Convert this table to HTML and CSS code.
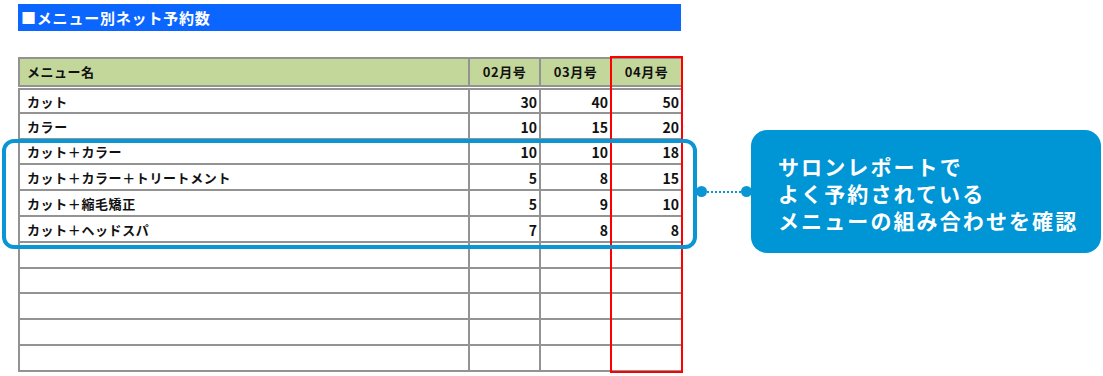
FILE: index.html
```html
<!DOCTYPE html>
<html lang="ja">
<head>
<meta charset="utf-8">
<link rel="stylesheet" href="styles.css">
</head>
<body>
<div class="page">
  <div class="report">
    <div class="title">■メニュー別ネット予約数</div>
    <div class="table-wrap">
      <table class="grid">
        <colgroup>
          <col class="c-name"><col class="c-num"><col class="c-num"><col class="c-last">
        </colgroup>
        <thead>
          <tr><th class="name">メニュー名</th><th>02月号</th><th>03月号</th><th>04月号</th></tr>
        </thead>
        <tbody>
          <tr><td class="name">カット</td><td>30</td><td>40</td><td>50</td></tr>
          <tr><td class="name">カラー</td><td>10</td><td>15</td><td>20</td></tr>
          <tr><td class="name">カット＋カラー</td><td>10</td><td>10</td><td>18</td></tr>
          <tr><td class="name">カット＋カラー＋トリートメント</td><td>5</td><td>8</td><td>15</td></tr>
          <tr><td class="name">カット＋縮毛矯正</td><td>5</td><td>9</td><td>10</td></tr>
          <tr><td class="name">カット＋ヘッドスパ</td><td>7</td><td>8</td><td>8</td></tr>
          <tr><td class="name"></td><td></td><td></td><td></td></tr>
          <tr><td class="name"></td><td></td><td></td><td></td></tr>
          <tr><td class="name"></td><td></td><td></td><td></td></tr>
          <tr><td class="name"></td><td></td><td></td><td></td></tr>
          <tr><td class="name"></td><td></td><td></td><td></td></tr>
        </tbody>
      </table>
      <div class="col-mark"></div>
    </div>
  </div>
  <div class="note">サロンレポートで<br>よく予約されている<br>メニューの組み合わせを確認</div>
  <div class="highlight"></div>
  <div class="connector"><span class="dot"></span><span class="line"></span><span class="dot"></span></div>
</div>
</body>
</html>
```
FILE: styles.css
```css
* { box-sizing: border-box; }
html, body { margin: 0; padding: 0; background: #fff; }
body { font-family: "Noto Sans CJK JP", sans-serif; color: #111; }

.page {
  position: relative;
  width: 1103px;
  height: 376px;
  display: flex;
  align-items: flex-start;
  padding-left: 18px;
  padding-top: 4px;
}

.report { width: 663px; }

.title {
  height: 27px;
  background: #0a66ff;
  color: #fff;
  font-weight: 700;
  font-size: 15px;
  letter-spacing: 0.8px;
  line-height: 27px;
  padding-left: 3px;
}

.table-wrap {
  position: relative;
  margin-top: 26px;
}

.grid {
  width: 663px;
  border-collapse: collapse;
  table-layout: fixed;
  font-size: 14px;
  font-weight: 700;
}
.c-name { width: 450px; }
.c-num { width: 71px; }
.c-last { width: 71px; }

.grid th, .grid td {
  border: 2px solid #939393;
  padding: 0 2px 0 0;
  text-align: right;
  line-height: 18px;
  white-space: nowrap;
}
.grid th {
  height: 29px;
  background: #c4d79b;
  text-align: center;
  padding: 0;
  font-size: 13px;
  letter-spacing: 0.5px;
  border-bottom: 5px double #939393;
}
.grid th.name { text-align: left; padding-left: 7px; }
.grid td { height: 25.8px; padding-top: 2px; }
.grid td.name { text-align: left; padding-left: 7px; font-size: 13px; letter-spacing: 0.6px; }

.col-mark {
  position: absolute;
  top: -1px;
  bottom: -1px;
  right: -2px;
  width: 73px;
  border: 2px solid #ff0000;
}

.note {
  margin-left: 70px;
  margin-top: 126px;
  width: 350px;
  height: 123px;
  border-radius: 16px;
  background: #0095d5;
  color: #fff;
  font-weight: 700;
  font-size: 21px;
  letter-spacing: 2.1px;
  line-height: 27px;
  padding: 23px 0 0 27px;
}

.highlight {
  position: absolute;
  left: 2px;
  top: 139px;
  width: 695px;
  height: 110px;
  border: 4px solid #0a95d4;
  border-radius: 12px;
}

.connector {
  position: absolute;
  left: 696px;
  top: 186px;
  display: flex;
  align-items: center;
  height: 11px;
}
.connector .dot {
  width: 11px;
  height: 11px;
  border-radius: 50%;
  background: #0a95d4;
}
.connector .line {
  width: 34px;
  height: 0;
  border-top: 2px dotted #0a95d4;
}
```
